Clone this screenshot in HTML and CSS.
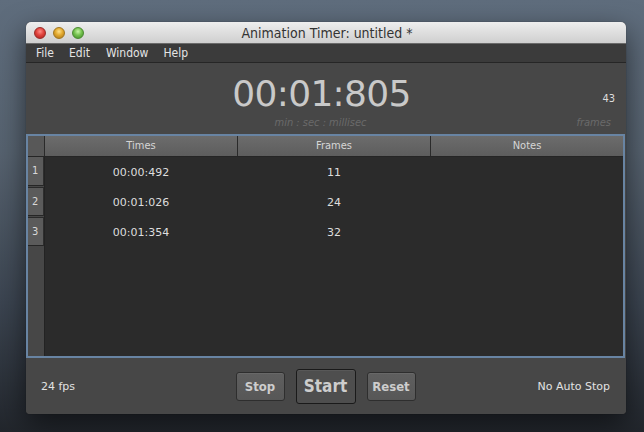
FILE: index.html
```html
<!DOCTYPE html>
<html>
<head>
<meta charset="utf-8">
<title>Animation Timer</title>
<link rel="stylesheet" href="styles.css">
</head>
<body>
<div class="window">
  <div class="titlebar">
    <div class="lights">
      <span class="light red"></span>
      <span class="light yellow"></span>
      <span class="light green"></span>
    </div>
    <div class="title">Animation Timer: untitled *</div>
    <div></div>
  </div>
  <div class="menubar">
    <span>File</span>
    <span>Edit</span>
    <span>Window</span>
    <span>Help</span>
  </div>
  <div class="timer">
    <div></div>
    <div class="bigtime">00:01:805</div>
    <div class="framecount">43</div>
    <div></div>
    <div class="label">min : sec : millisec</div>
    <div class="label right">frames</div>
  </div>
  <div class="table">
    <div class="thead">
      <div class="corner"></div>
      <div class="th">Times</div>
      <div class="th">Frames</div>
      <div class="th">Notes</div>
    </div>
    <div class="tbody">
      <div class="rowheads">
        <div class="rh">1</div>
        <div class="rh">2</div>
        <div class="rh">3</div>
      </div>
      <div class="rows">
        <div class="row"><div>00:00:492</div><div>11</div><div></div></div>
        <div class="row"><div>00:01:026</div><div>24</div><div></div></div>
        <div class="row"><div>00:01:354</div><div>32</div><div></div></div>
      </div>
    </div>
  </div>
  <div class="bottombar">
    <div class="fps">24 fps</div>
    <div class="buttons">
      <button class="btn stop">Stop</button>
      <button class="btn start">Start</button>
      <button class="btn reset">Reset</button>
    </div>
    <div class="autostop">No Auto Stop</div>
  </div>
</div>
</body>
</html>
```

FILE: styles.css
```css
html, body {
  margin: 0;
  padding: 0;
}
body {
  width: 644px;
  height: 432px;
  overflow: hidden;
  background: linear-gradient(180deg, #5f6d7d 0%, #56626f 35%, #3b4450 70%, #22262c 100%);
  font-family: "DejaVu Sans", sans-serif;
  font-stretch: condensed;
  padding-top: 22px;
  box-sizing: border-box;
}
.window {
  margin-left: 26px;
  width: 600px;
  height: 392px;
  display: flex;
  flex-direction: column;
  border-radius: 5px 5px 4px 4px;
  overflow: hidden;
  background: #474747;
  box-shadow: 0 10px 28px rgba(0, 0, 0, 0.55), 0 0 1px rgba(0,0,0,0.6);
}
.titlebar {
  height: 21px;
  flex: none;
  display: grid;
  grid-template-columns: 1fr auto 1fr;
  align-items: center;
  background: linear-gradient(180deg, #eeeeee 0%, #dedede 50%, #cfcfcf 100%);
  border-bottom: 1px solid #6a6a6a;
}
.lights {
  display: flex;
  gap: 7px;
  padding-left: 8px;
}
.light {
  width: 12px;
  height: 12px;
  border-radius: 50%;
  box-sizing: border-box;
}
.red {
  background: radial-gradient(circle at 50% 35%, #ff8c85 0%, #e0443e 45%, #a81e1b 100%);
  border: 1px solid #9a2c28;
}
.yellow {
  background: radial-gradient(circle at 50% 35%, #ffe08a 0%, #e2a92e 45%, #a8721a 100%);
  border: 1px solid #a0761e;
}
.green {
  background: radial-gradient(circle at 50% 35%, #c8f4a6 0%, #75c24f 45%, #3f8a26 100%);
  border: 1px solid #4a8a30;
}
.title {
  font-size: 14px;
  color: #333333;
  padding-left: 2px;
}
.menubar {
  height: 18px;
  flex: none;
  display: flex;
  align-items: center;
  padding-left: 10px;
  background: #3b3b3b;
  border-bottom: 1px solid #262626;
  font-size: 12px;
  color: #e4e4e4;
}
.menubar span {
  margin-right: 15px;
}
.menubar span:nth-child(2) {
  margin-right: 16px;
}
.timer {
  flex: none;
  height: 71px;
  box-sizing: border-box;
  padding: 11px 11px 4px 0;
  display: grid;
  grid-template-columns: 1fr auto 1fr;
  grid-template-rows: 40px 14px;
  row-gap: 2px;
  background: #474747;
}
.bigtime {
  font-size: 36px;
  line-height: 40px;
  letter-spacing: -0.7px;
  color: #c9c9c9;
  font-stretch: normal;
  text-align: center;
  padding-left: 2px;
}
.framecount {
  justify-self: end;
  align-self: start;
  margin-top: 18px;
  font-size: 11px;
  line-height: 14px;
  color: #dddddd;
}
.label {
  font-size: 11px;
  line-height: 14px;
  font-style: italic;
  color: #6a6a6a;
  text-align: center;
}
.label.right {
  justify-self: end;
  margin-right: 4px;
}
.table {
  flex: none;
  height: 224px;
  box-sizing: border-box;
  margin-right: 1px;
  border: 2px solid #6884a3;
  background: #252525;
  display: flex;
  flex-direction: column;
}
.thead {
  height: 20px;
  flex: none;
  display: grid;
  grid-template-columns: 16px 1fr 1fr 1fr;
  column-gap: 1px;
  background: #2a2a2a;
  margin-bottom: 1px;
}
.corner {
  background: #585858;
}
.th {
  background: linear-gradient(180deg, #6c6c6c 0%, #5d5d5d 100%);
  color: #d6d6d6;
  font-size: 11px;
  line-height: 20px;
  text-align: center;
}
.tbody {
  flex: 1;
  display: grid;
  grid-template-columns: 16px 1fr;
  column-gap: 1px;
  background: #232323;
}
.rowheads {
  background: #474747;
  display: flex;
  flex-direction: column;
}
.rh {
  height: 29px;
  box-sizing: border-box;
  background: #5b5b5b;
  border-bottom: 1px solid #262626;
  margin-bottom: 1px;
  border-right: 1px solid #2e2e2e;
  color: #d8d8d8;
  font-size: 11px;
  line-height: 28px;
  padding-left: 4px;
}
.rh + .rh {
  border-top: 1px solid #2a2a2a;
}
.rows {
  background: #2b2b2b;
}
.row {
  height: 30px;
  display: grid;
  grid-template-columns: 1fr 1fr 1fr;
  column-gap: 1px;
  align-items: center;
  text-align: center;
  font-size: 11px;
  font-stretch: normal;
  color: #dedede;
}
.bottombar {
  flex: 1;
  display: grid;
  grid-template-columns: 1fr auto 1fr;
  align-items: center;
  padding: 0 16px 0 15px;
  background: #474747;
  font-size: 11px;
  font-stretch: normal;
  color: #e2e2e2;
}
.buttons {
  display: flex;
  align-items: center;
  gap: 11px;
}
.btn {
  font-family: "DejaVu Sans", sans-serif;
  font-stretch: condensed;
  font-weight: bold;
  color: #cdcdcd;
  background: linear-gradient(180deg, #5f5f5f 0%, #575757 100%);
  border: 1px solid #2e2e2e;
  border-radius: 3px;
  padding: 0;
  box-shadow: inset 0 1px 0 rgba(255,255,255,0.06);
}
.stop {
  width: 49px;
  height: 29px;
  font-size: 13px;
}
.start {
  width: 60px;
  height: 35px;
  font-size: 17px;
  background: #4e4e4e;
  border-color: #1a1a1a;
}
.reset {
  width: 49px;
  height: 29px;
  font-size: 13px;
}
.autostop {
  justify-self: end;
}
```
